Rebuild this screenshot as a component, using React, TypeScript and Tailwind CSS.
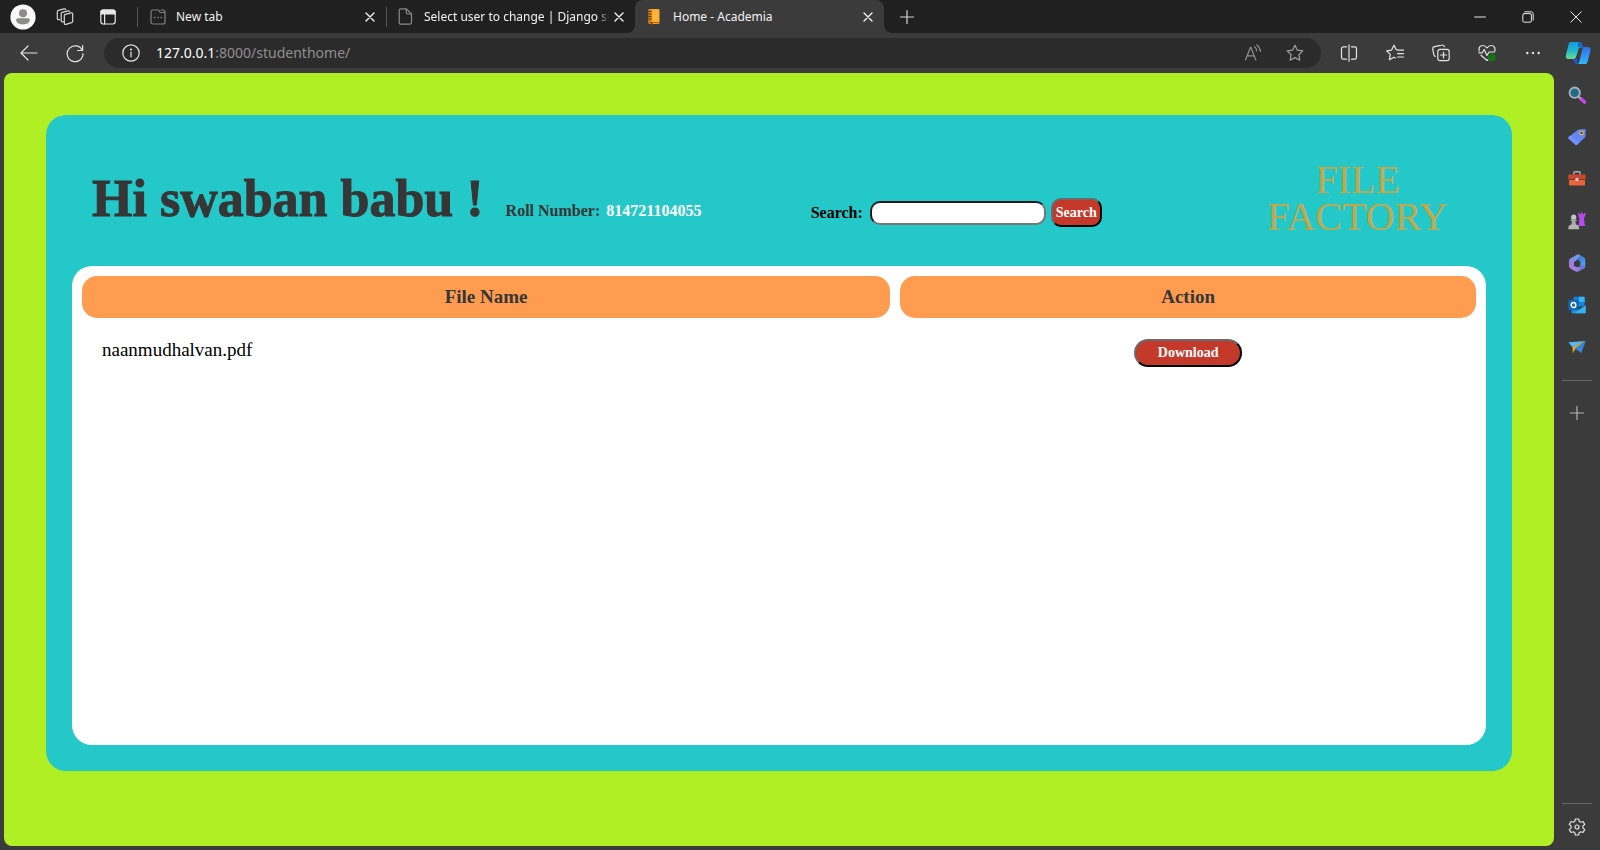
import type { ReactNode } from "react";

type IconProps = { children: ReactNode; size?: string; box?: string };

function Line({ children, size = "size-5", box = "0 0 20 20" }: IconProps) {
  return (
    <svg viewBox={box} className={`${size} shrink-0`} fill="none" stroke="currentColor" strokeWidth="1.2" strokeLinecap="round" strokeLinejoin="round" aria-hidden="true">
      {children}
    </svg>
  );
}

function IconButton({ label, className, children }: { label: string; className: string; children: ReactNode }) {
  return (
    <button type="button" aria-label={label} className={`flex shrink-0 items-center justify-center ${className}`}>
      {children}
    </button>
  );
}

const CloseIcon = () => (
  <Line size="size-3" box="0 0 12 12">
    <path d="M2 2l8 8M10 2l-8 8" strokeWidth="1.400" />
  </Line>
);

const PlusIcon = () => (
  <Line size="size-4" box="0 0 16 16">
    <path d="M8 1.500v13M1.500 8h13" />
  </Line>
);

function TabBar() {
  return (
    <header className="flex h-[33px] items-center bg-[#202020] text-[12px] leading-4 text-[#f2f2f2]">
      <IconButton label="Profile" className="ml-2.5 w-[26px]">
        <svg viewBox="0 0 26 26" className="size-[26px]" aria-hidden="true">
          <circle cx="13" cy="13" r="12.6" fill="#f8f8f8" />
          <circle cx="13" cy="9.2" r="4" fill="#8d8b89" />
          <path d="M8 14.3h10c1.2 0 1.8.8 1.8 1.8 0 2.600-2.900 4.300-6.800 4.300s-6.800-1.700-6.800-4.300c0-1 .7-1.800 1.800-1.800z" fill="#8d8b89" />
        </svg>
      </IconButton>
      <IconButton label="Workspaces" className="ml-2 w-[42px] text-[#d6d6d6]">
        <Line size="size-[18px]" box="0 0 18 18">
          <path d="M8.700 6.600l6.300-1.700c.9-.2 1.700.3 1.700 1.200v7.200c0 .7-.4 1.200-1.100 1.400l-5.600 1.700c-.9.3-1.700-.2-1.700-1.200V7.700c0-.6 0-1 .4-1.100z" />
          <path d="M7.400 13.700c-1 .3-2.200.2-2.200-1V5.700c0-.7.4-1.100 1-1.300L12 2.900c.8-.2 1.400.1 1.600.7" />
          <path d="M3.700 11.600c-1.200.3-2.400 0-2.400-1V3.700c0-.7.4-1.200 1-1.400L8 .9c.8-.2 1.400 0 1.700.6" />
        </Line>
      </IconButton>
      <IconButton label="Tab actions" className="w-11 text-[#e8e8e8]">
        <Line size="size-4" box="0 0 16 16">
          <rect x=".8" y="1" width="14.4" height="14" rx="2.400" />
          <path d="M1 2.800C1 1.600 1.800 1 3 1h10c1.200 0 2 .6 2 1.800V5H1z" fill="currentColor" />
          <path d="M4.600 5v9.800" />
        </Line>
      </IconButton>
      <span className="ml-[7px] h-5 w-px bg-[#555]" />
      <div className="flex w-[248px] items-center pr-2.5 pl-3">
        <span className="text-[#808080]">
          <Line size="size-4" box="0 0 16 16">
            <path d="M3 1h5.200c.7 0 .8.400 1.200 1.300.4.900.8 1.200 1.700 1.200H15V13c0 1.200-.8 2-2 2H3c-1.200 0-2-.8-2-2V3c0-1.200.8-2 2-2zM11 1h2c1.200 0 2 .8 2 2v1" />
            <path d="M4.500 8.500h.3M7.900 8.500h.3M11.200 8.500h.3" strokeWidth="1.600" />
          </Line>
        </span>
        <span className="ml-2.5 flex-1">New tab</span>
        <IconButton label="Close New tab" className="size-3"><CloseIcon /></IconButton>
      </div>
      <span className="h-5 w-px bg-[#555]" />
      <div className="flex w-[248px] items-center pr-2.5 pl-2.5">
        <span className="text-[#8a8a8a]">
          <Line size="size-[17px]" box="0 0 17 17">
            <path d="M4 .8h5.300L14.500 6v8.400c0 1-.7 1.800-1.800 1.800H4c-1 0-1.800-.7-1.800-1.800V2.600C2.200 1.500 3 .8 4 .8zM9.300.8v3.700c0 .9.600 1.500 1.500 1.500h3.700" />
          </Line>
        </span>
        <span className="ml-2.5 flex-1 overflow-hidden mask-r-from-94% whitespace-nowrap">Select user to change | Django si</span>
        <IconButton label="Close Select user to change" className="ml-1 size-3"><CloseIcon /></IconButton>
      </div>
      <div className="relative flex h-full w-[249px] items-center rounded-t-lg bg-[#3b3b3b] pr-2.5 pl-3">
        <svg viewBox="0 0 8 8" className="absolute bottom-0 -left-2 size-2" aria-hidden="true"><path d="M8 0v8H0c4.400 0 8-3.600 8-8z" fill="#3b3b3b" /></svg>
        <svg viewBox="0 0 8 8" className="absolute -right-2 bottom-0 size-2" aria-hidden="true"><path d="M0 0v8h8C3.600 8 0 4.400 0 0z" fill="#3b3b3b" /></svg>
        <svg viewBox="0 0 14 18" className="h-[18px] w-3.5" aria-hidden="true">
          <rect x="1.500" y="1" width="11" height="15" rx="1" fill="#f9a825" />
          <rect x="5.500" y="2.500" width="6" height="10.500" fill="#ffb43c" />
          <path d="M2 1.500h2.800v13.500H2z" fill="#d9820f" />
          <path d="M1.500 3.500h3M1.500 6h3M1.500 8.500h3M1.500 11h3" stroke="#5b3300" strokeWidth="1" />
          <path d="M2 14.600h10.500" stroke="#a85f06" strokeWidth="1" />
          <path d="M3.500 14.500h2V18l-1-1-1 1z" fill="#7a3c00" />
        </svg>
        <span className="ml-3 flex-1">Home - Academia</span>
        <IconButton label="Close Home - Academia" className="size-3"><CloseIcon /></IconButton>
      </div>
      <IconButton label="New tab" className="ml-[15px] size-4 text-[#d6d6d6]"><PlusIcon /></IconButton>
      <div className="ml-auto flex h-full text-[#e8e8e8]">
        <IconButton label="Minimize" className="w-12">
          <Line size="size-3" box="0 0 12 12"><path d="M.6 6h10.800" strokeWidth="1" /></Line>
        </IconButton>
        <IconButton label="Restore" className="w-12">
          <Line size="size-3" box="0 0 12 12">
            <rect x=".8" y="2.600" width="8.600" height="8.600" rx="1.400" strokeWidth="1" />
            <path d="M2.800.8h6.400c1.200 0 2 .8 2 2v6.400" strokeWidth="1" />
          </Line>
        </IconButton>
        <IconButton label="Close" className="w-12">
          <Line size="size-3" box="0 0 12 12"><path d="M.8.8l10.400 10.400M11.200.8L.8 11.200" strokeWidth="1" /></Line>
        </IconButton>
      </div>
    </header>
  );
}

function CopilotIcon() {
  return (
    <svg viewBox="0 0 26 24" className="h-6 w-[26px]" aria-hidden="true">
      <defs>
        <linearGradient id="cpA" x1="0" y1="0" x2="0" y2="1">
          <stop offset="0" stopColor="#1799e0" />
          <stop offset=".5" stopColor="#1fb7cf" />
          <stop offset="1" stopColor="#6cdc8a" />
        </linearGradient>
        <linearGradient id="cpB" x1="0" y1="0" x2="0" y2="1">
          <stop offset="0" stopColor="#2e6fe6" />
          <stop offset="1" stopColor="#31b8f7" />
        </linearGradient>
      </defs>
      <path d="M6 1h8.200c2 0 2.500 1.200 3.300 3.500L18 6l-4 1-3 9c-.6 1.600-1.500 2-3 2H3.500C1 18 .3 16.300 1 13.500L3.600 3.500C4 1.800 4.700 1 6 1z" fill="url(#cpA)" />
      <path d="M13 1h1.500c1.800 0 2.300 1.200 3 3.500L18 6h-5z" fill="#1469c7" />
      <path d="M8 18l4-1 .5 6c-1.700 0-2.700-.8-3.500-2.800z" fill="#2455d8" />
      <path d="M18 6h4.800c2.500 0 3.200 1.600 2.500 4.400l-2.700 10c-.4 1.700-1.200 2.600-2.600 2.600h-8c1.500-.3 1.900-1.200 2.300-2.600L17 9.500z" fill="url(#cpB)" />
    </svg>
  );
}

function Toolbar() {
  return (
    <nav aria-label="Browser toolbar" className="flex h-10 items-center bg-[#3b3b3b] text-[#e4e4e4]">
      <IconButton label="Back" className="ml-[6px] w-[46px]">
        <Line><path d="M18 10H2M9 3l-7 7 7 7" /></Line>
      </IconButton>
      <IconButton label="Refresh" className="w-[46px]">
        <Line><path d="M17.300 7.500A7.900 7.900 0 1 0 18 10.500M17.600 2.500v5h-5" /></Line>
      </IconButton>
      <div className="ml-1.5 flex h-[30px] flex-1 items-center rounded-full bg-[#2b2b2b] pr-[5px] pl-[18px]">
        <Line size="size-[18px]" box="0 0 18 18">
          <circle cx="9" cy="9" r="8.200" />
          <path d="M9 8v4.800" />
          <circle cx="9" cy="5.500" r=".5" fill="currentColor" />
        </Line>
        <p className="ml-4 flex-1 text-[14px] leading-5 text-[#8f8f8f]">
          <span className="text-white">127.0.0.1</span>:8000/studenthome/
        </p>
        <IconButton label="Read aloud" className="w-[42px] text-[#8f8f8f]">
          <Line size="size-[18px]" box="0 0 18 18">
            <path d="M1.500 16L6.500 3.300h.4L11.800 16M3.200 11.800h7M10.500 2.800c1.300.9 2.100 2.300 2.300 4.200M12.800.9c2.200 1.500 3.400 3.700 3.700 6.500" />
          </Line>
        </IconButton>
        <IconButton label="Add to favorites" className="w-[42px] text-[#a0a0a0]">
          <Line size="size-[18px]" box="0 0 18 18">
            <path d="M9 1.200l2.400 5 5.400.7-4 3.800 1 5.500L9 13.600l-4.800 2.600 1-5.500-4-3.800 5.400-.7z" />
          </Line>
        </IconButton>
      </div>
      <div className="ml-[5px] flex">
        <IconButton label="Split screen" className="w-[46px]">
          <Line size="size-[18px]" box="0 0 18 18">
            <path d="M6.500 2.800H3.300c-1 0-1.800.8-1.800 1.800v8.800c0 1 .8 1.800 1.800 1.800h3.200M11.500 2.800h3.200c1 0 1.800.8 1.800 1.800v8.800c0 1-.8 1.800-1.800 1.800h-3.200M9 .8v16.400" />
          </Line>
        </IconButton>
        <IconButton label="Favorites" className="w-[46px]">
          <Line size="size-[18px]" box="0 0 18 18">
            <path d="M12 6l-1.800-.3-2.200-4.500-2.400 4.900-5 .7 3.700 3.600-.9 5.300L8 13.200l1.400.8M11.600 6.200h5.900M11.600 9.600h5.900M11.600 13h5.900" />
          </Line>
        </IconButton>
        <IconButton label="Collections" className="w-[46px]">
          <Line size="size-[18px]" box="0 0 18 18">
            <rect x="5.800" y="5.300" width="11.400" height="11.400" rx="2.200" />
            <path d="M11.500 8v6M8.500 11h6M3.300 12.400c-.9-.3-1.300-1-1.500-1.800L.8 5.300C.5 4 1.200 3 2.400 2.700l7.400-1.600c1.200-.3 2.200.3 2.600 1.500" />
          </Line>
        </IconButton>
        <IconButton label="Browser essentials" className="w-[46px]">
          <Line size="size-[18px]" box="0 0 18 18">
            <path d="M1.200 7C.4 3.500 2.300 1.500 4.700 1.500c1.800 0 3.200.9 4.300 2.500 1.100-1.600 2.500-2.500 4.300-2.500 2.400 0 4.300 2 3.500 5.500M.8 8.800h3.400l2-3.300 2.800 6 2-3.500h5.500M3 11.200l6 5.300 2-1.700" />
            <circle cx="13.800" cy="13.400" r="4" fill="#167016" stroke="none" />
          </Line>
        </IconButton>
        <IconButton label="Settings and more" className="w-[46px]">
          <svg viewBox="0 0 16 4" className="h-1 w-4" fill="currentColor" aria-hidden="true"><circle cx="2.300" cy="2" r="1.200" /><circle cx="8" cy="2" r="1.200" /><circle cx="13.700" cy="2" r="1.200" /></svg>
        </IconButton>
        <IconButton label="Copilot" className="w-11"><CopilotIcon /></IconButton>
      </div>
    </nav>
  );
}

const sidebarApps: { label: string; art: ReactNode }[] = [
  {
    label: "Search",
    art: (
      <>
        <path d="M13 13l3.500 3" stroke="#c445e8" strokeWidth="3.600" strokeLinecap="round" />
        <path d="M10.500 10.500l2 2" stroke="#a9b4bd" strokeWidth="1.800" />
        <circle cx="6.700" cy="6.700" r="5.200" fill="#246b8a" stroke="#a9b4bd" strokeWidth="1.800" />
      </>
    ),
  },
  {
    label: "Shopping",
    art: (
      <>
        <path d="M10.500 1.600l6-.6c.8 0 1.200.4 1.200 1.200L17.500 8c0 .6-.2 1-.6 1.400l-7.500 7c-.8.7-1.500.7-2.200 0L.8 10.800c-.6-.6-.6-1.300 0-2z" fill="#6486f2" />
        <path d="M.8 10.800l6.400 5.600c.7.700 1.400.7 2.200 0l2-1.900L2.600 7.600.8 8.800c-.6.7-.6 1.400 0 2z" fill="#7593fb" />
        <circle cx="13.500" cy="5" r="1.700" fill="#3a3a3a" stroke="#f0c23a" strokeWidth="1.100" />
      </>
    ),
  },
  {
    label: "Tools",
    art: (
      <>
        <path d="M5.800 4.800V3c0-.8.500-1.300 1.300-1.300h3.800c.8 0 1.300.5 1.300 1.300v1.800" fill="none" stroke="#a8b0b4" strokeWidth="1.400" />
        <rect x=".3" y="4.500" width="17.400" height="5" rx="1" fill="#c9472a" />
        <path d="M1 9h16v5.500c0 .6-.4 1-1 1H2c-.6 0-1-.4-1-1z" fill="#e8643c" />
        <path d="M1 9h16v1H1z" fill="#8f2c17" />
        <circle cx="9" cy="9.400" r="1.700" fill="#d8d8d8" />
      </>
    ),
  },
  {
    label: "Games",
    art: (
      <>
        <path d="M10 .8l1.600.4v1h1.300V.6h1.800v1.600H16v-1l1.800-.4-.9 4.200-1 .8.6 6.200 1 2H10l.9-2 .6-6.200-.9-.8z" fill="#b44bf0" />
        <circle cx="5.700" cy="5.200" r="2.600" fill="#c2c2c2" />
        <path d="M2.700 7.500h6v1.600H7.500c0 2 .4 3.100 1.600 4.300H2.300c1.200-1.200 1.600-2.300 1.600-4.300H2.700z" fill="#a6a6a6" />
        <path d="M1.900 13h7.600c1.200.7 1.600 1.700 1.600 4.200H.3c0-2.500.4-3.500 1.600-4.200z" fill="#b4b4b4" />
      </>
    ),
  },
  {
    label: "Microsoft 365",
    art: (
      <>
        <defs>
          <linearGradient id="msA" x1="1" y1="0" x2="0" y2="1">
            <stop offset="0" stopColor="#5aa9f0" />
            <stop offset="1" stopColor="#b06fd8" />
          </linearGradient>
          <linearGradient id="msB" x1="0" y1="0" x2="1" y2="1">
            <stop offset="0" stopColor="#3a5fd0" />
            <stop offset="1" stopColor="#55b4f4" />
          </linearGradient>
          <linearGradient id="msC" x1="0" y1="0" x2="1" y2="0">
            <stop offset="0" stopColor="#c58be6" />
            <stop offset="1" stopColor="#5b6fe0" />
          </linearGradient>
        </defs>
        <path d="M9.500.4L3 4C1.500 4.900.9 5.800.9 7.500v4.800c0 1.500 1.200 2.100 2.500 1.500L6 12.400V8l5.800-4.300c1.200-.9 1.200-1.900.2-2.500C11 .5 10.500.2 9.500.4z" fill="url(#msA)" />
        <path d="M11.500.9L15.300 3c1.300.8 1.900 1.800 1.900 3.300v6c0 1.300-.6 2.100-1.600 2.700l-3.400-2.500V7.800L8.500 5l3.500-2.200c.5-.6.4-1.400-.5-1.900z" fill="url(#msB)" />
        <path d="M1.800 14.100l5.200 3.100c1.400.8 2.600.8 4 0l5-3c1.300-.9 1.300-2.200.3-3.200l-7.100 2.200L6 12l-3 1.800z" fill="url(#msC)" />
      </>
    ),
  },
  {
    label: "Outlook",
    art: (
      <>
        <path d="M5.500 1.500c0-.5.300-.8.800-.8h9.500c.5 0 .8.300.8.800v9H5.500z" fill="#1683d8" />
        <path d="M11 .7h4.800c.5 0 .8.300.8.800V6H11z" fill="#35b8f1" />
        <path d="M3.500 9.500l7.500 4 6.700-4v6.800c0 .6-.4 1-1 1H4.500c-.6 0-1-.4-1-1z" fill="#1490df" />
        <path d="M17.700 9.500v6.800c0 .6-.4 1-1 1H6z" fill="#35b0ea" />
        <rect x=".3" y="3.800" width="10.400" height="10.400" rx="1" fill="#1066b5" />
        <ellipse cx="5.500" cy="9" rx="2.300" ry="2.600" fill="none" stroke="#fff" strokeWidth="1.500" />
      </>
    ),
  },
  {
    label: "Drop",
    art: (
      <>
        <path d="M.3 4.300L17.700 3l-13 6.500z" fill="#53b9ef" />
        <path d="M17.700 3L4.600 9.300v5.800l2.600-4.300z" fill="#e8a91f" />
        <path d="M17.700 3L7 10.500l6.300 4.500z" fill="#2f87e0" />
        <path d="M7 10.700l-2.400 4.400 3.300-3.700z" fill="#b87908" />
      </>
    ),
  },
];

function Sidebar() {
  return (
    <aside className="flex w-[46px] shrink-0 flex-col items-center pt-px pb-2.5 text-[#b5b5b5]">
      {sidebarApps.map((app) => (
        <IconButton key={app.label} label={app.label} className="h-[42px] w-full">
          <svg viewBox="0 0 18 18" className="size-[18px]" aria-hidden="true">{app.art}</svg>
        </IconButton>
      ))}
      <hr className="mt-3 w-[30px] border-[#666]" />
      <IconButton label="Customize sidebar" className="mt-6 size-4"><PlusIcon /></IconButton>
      <hr className="mt-auto w-[30px] border-[#666]" />
      <IconButton label="Settings" className="mt-3.5 text-[#e4e4e4]">
        <Line size="size-[18px]" box="0 0 18 18">
          <path d="M7.300 1h3.400l.5 2.300 1.500.9 2.300-.7 1.700 2.900-1.800 1.700v1.800l1.800 1.700-1.700 2.900-2.300-.7-1.500.9-.5 2.300H7.300l-.5-2.300-1.500-.9-2.300.7-1.700-2.900 1.800-1.700V8.100L1.300 6.400 3 3.500l2.300.7 1.500-.9z" />
          <circle cx="9" cy="9" r="2" />
        </Line>
      </IconButton>
    </aside>
  );
}

const files = ["naanmudhalvan.pdf"];

function StudentHome() {
  return (
    <main className="ml-1 flex flex-1 flex-col rounded-lg bg-[#b1ef25] px-[42px] pt-[42px] pb-[75px] font-['Liberation_Serif',serif]">
      <section className="flex flex-1 flex-col rounded-[20px] bg-[#24c8c9] px-[26px] pb-[26px]">
        <div className="grid h-[151px] grid-cols-[53%_1fr_auto] items-center pr-[38px] pl-5">
          <div className="flex items-baseline gap-[22px] pt-4 font-bold text-[#363636]">
            <h1 className="text-[52px] leading-[60px] [-webkit-text-stroke:1px_#363636]">Hi swaban babu !</h1>
            <p className="text-[16px] leading-5">
              Roll Number: <span className="ml-0.5 text-white">814721104055</span>
            </p>
          </div>
          <form className="flex items-center pt-11" onSubmit={(event) => event.preventDefault()}>
            <label htmlFor="search" className="text-[16px] leading-5 font-bold text-black">Search:</label>
            <input id="search" type="text" className="ml-[7px] h-6 w-44 rounded-[10px] border-2 border-t-[#1d1d1d] border-r-[#767676] border-b-[#767676] border-l-[#1d1d1d] bg-white px-2 text-sm" />
            <button type="submit" className="ml-[5px] h-[29px] rounded-[10px] border-2 border-t-[#6b6b6b] border-r-black border-b-black border-l-[#6b6b6b] bg-[#c5392b] px-[3px] text-[14px] leading-5 font-bold text-white">Search</button>
          </form>
          <p className="pt-3.5 text-center text-[40px] leading-[37px] text-[#c3a84a]">
            FILE
            <br />
            FACTORY
          </p>
        </div>
        <div className="flex-1 rounded-[20px] bg-white">
          <table className="w-full table-fixed border-separate border-spacing-[10px] text-[19px] leading-[22px]">
            <thead className="text-[#363636]">
              <tr>
                <th scope="col" className="w-[58.4%] rounded-[15px] bg-[#ff9c50] py-2.5 font-bold">File Name</th>
                <th scope="col" className="rounded-[15px] bg-[#ff9c50] py-2.5 font-bold">Action</th>
              </tr>
            </thead>
            <tbody>
              {files.map((file) => (
                <tr key={file} className="align-top">
                  <td className="px-5 py-[11px] text-black">{file}</td>
                  <td className="px-5 py-[11px] text-center">
                    <button type="button" className="h-7 rounded-full border-2 border-t-[#6b6b6b] border-r-black border-b-black border-l-[#6b6b6b] bg-[#c5392b] px-[22px] text-[14px] leading-5 font-bold text-white">Download</button>
                  </td>
                </tr>
              ))}
            </tbody>
          </table>
        </div>
      </section>
    </main>
  );
}

export default function App() {
  return (
    <div className="flex min-h-screen flex-col bg-[#3b3b3b] font-['Noto_Sans',sans-serif]">
      <TabBar />
      <Toolbar />
      <div className="flex flex-1 pb-1">
        <StudentHome />
        <Sidebar />
      </div>
    </div>
  );
}
